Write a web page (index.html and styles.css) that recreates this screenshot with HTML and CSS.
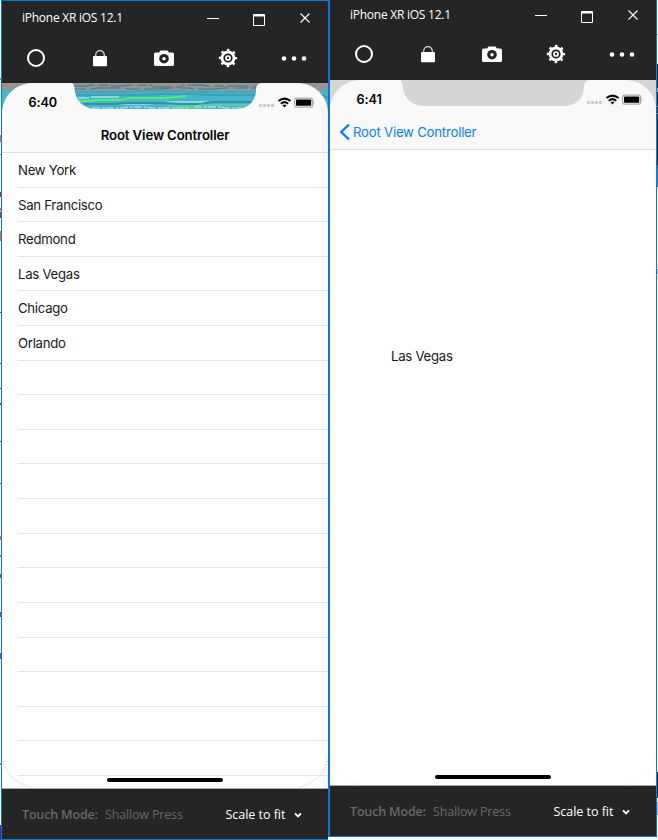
FILE: index.html
```
<!DOCTYPE html>
<html lang="en">
<head>
<meta charset="utf-8">
<title>iPhone XR iOS 12.1</title>
<link rel="stylesheet" href="styles.css">
</head>
<body>
<svg class="defs" aria-hidden="true">
  <symbol id="home" viewBox="0 0 22 22"><circle cx="11" cy="11" r="8" fill="none" stroke="#fff" stroke-width="2"/></symbol>
  <symbol id="lock" viewBox="0 0 22 22"><rect x="4" y="9" width="14" height="10.3" rx=".8" fill="#fff"/><path d="M6.7 9.500V8a4.300 4.300 0 0 1 8.600 0v1.500" fill="none" stroke="#ddd" stroke-width="1.200"/></symbol>
  <symbol id="camera" viewBox="0 0 22 22"><path d="M2.500 5.500H6l1.500-2h7l1.500 2h3.500q1.500 0 1.500 1.500v10.500q0 1.500-1.500 1.500h-17Q1 19 1 17.500V7q0-1.500 1.500-1.500z" fill="#fff"/><circle cx="11" cy="11.700" r="4.800" fill="#252525"/><circle cx="11" cy="11.700" r="2.200" fill="#252525" stroke="#fff" stroke-width="0"/><circle cx="11" cy="11.700" r="1.700" fill="#fff"/></symbol>
  <symbol id="gear" viewBox="0 0 22 22"><circle cx="11" cy="11" r="6" fill="none" stroke="#fff" stroke-width="2.800"/><circle cx="11" cy="11" r="8" fill="none" stroke="#fff" stroke-width="2.300" stroke-dasharray="2.500 3.783" stroke-dashoffset="1.250"/><circle cx="11" cy="11" r="2" fill="none" stroke="#fff" stroke-width="1.700"/></symbol>
  <symbol id="more" viewBox="0 0 26 22"><g fill="#fff"><circle cx="3" cy="11.500" r="2.300"/><circle cx="13" cy="11.500" r="2.300"/><circle cx="23" cy="11.500" r="2.300"/></g></symbol>
  <symbol id="controls" viewBox="0 0 106 16"><path d="M1 8.500h12" stroke="#fff"/><path d="M47.500 4.500h11v11h-11z" fill="none" stroke="#fff"/><path d="M47 5.500h12" stroke="#fff" stroke-width="2"/><path d="M94.500 3.500l9 9m0-9l-9 9" stroke="#fff" stroke-width="1.100"/></symbol>
  <symbol id="screen-top" viewBox="0 0 326 30"><path d="M0 30V28C2 12 13 1 30 0H69Q72 0 72.500 5C73 18 82 26 94 26H234C246 26 254 18 254 7Q254 0 260 0H296C315 1 326 15 326 30Z" fill="#f9f9f9"/></symbol>
  <symbol id="status" viewBox="0 0 58 14"><g fill="#c8c8c8"><rect x="0" y="9" width="3" height="3" rx="1"/><rect x="4" y="9" width="3" height="3" rx="1"/><rect x="8" y="9" width="3" height="3" rx="1"/><rect x="12" y="9" width="3" height="3" rx="1"/></g><g fill="none" stroke="#080808" stroke-width="2"><path d="M19.500 6.100q6-5 12 0"/><path d="M21.800 8.700q3.700-3.200 7.400 0"/></g><path d="M23.400 10.200q2.100-1.600 4.200 0l-2.100 2.300z" fill="#080808"/><rect x="35.600" y="3.100" width="18" height="9" rx="2.200" fill="none" stroke="#aaa" stroke-width="1.200"/><rect x="37" y="4.500" width="15.200" height="6.300" rx=".8"/><path d="M54.500 6q2 1.500 0 3z" fill="#aaa"/></symbol>
  <symbol id="down" viewBox="0 0 10 8"><path d="M2 2.400l3 3 3-3" fill="none" stroke="#fff" stroke-width="1.900"/></symbol>
</svg>
<main class="desktop">
  <svg class="gutter" viewBox="0 0 1 840" preserveAspectRatio="none"><path d="M0 0h1v840H0z" fill="#fff"/><path d="M.5 78v2m0 55v7m0 12v1m0 53v3m0 20v10M.5 536v4m0 15v2m0 206v2" stroke="#d8791e"/><path d="M.5 192v5m0 15v6M.5 312v1m0 50v1m0 24v1m0 14v2" stroke="#a33b32"/><path d="M.5 441v1m0 41v1m0 90v4m0 34v5m0 36v6" stroke="#4267c5"/><path d="M.5 825v15" stroke="#632472"/></svg>
  <section class="window first">
    <header class="titlebar"><span class="caption">iPhone XR iOS 12.1</span><svg class="controls"><use href="#controls"/></svg></header>
    <nav class="tools"><svg><use href="#home"/></svg><svg><use href="#lock"/></svg><svg><use href="#camera"/></svg><svg><use href="#gear"/></svg><svg class="more"><use href="#more"/></svg></nav>
    <div class="screen">
      <div class="navigation">
        <svg class="backdrop" viewBox="0 0 326 30">
          <path d="M0 0h326v30H0z" fill="#45b4cd"/><path d="M0 0h326v7H0z" fill="#999391"/>
          <g fill="none"><path d="M70 3h15l3-1h18l4 1h12l6-1h20l4 2h25l4-2h18l5 1h50" stroke="#2c7f91" stroke-dasharray="22 5 9 3"/><path d="M70 6h20l6-1h25l8 1h30l10-1h18l5 1h20l10-1h40" stroke="#397f8c" stroke-dasharray="14 4 30 6"/><path d="M70 9h55l15-1h40l12 1h70" stroke="#5a9eac" stroke-width="2"/><path d="M70 12h70l18-1h35l12 1h60" stroke="#3c9fb8" stroke-width="2"/><path d="M71 18h13l14-1h20l11-2h35l20-2" stroke="#54ee67" stroke-width="2"/><path d="M76 15h11m30 6h30l20-2h42m-120-5h28" stroke="#d5f4f5"/><path d="M82 21h30l13-1h38l16 1h20l10-2h45" stroke="#388fa7" stroke-width="2"/><path d="M90 25h32l3-1h20l4 1h37m6-1h28l3 1h17" stroke="#c9f2ff" stroke-dasharray="8 2 3 1"/><path d="M165 23h25l10-1h46m-76 3h34" stroke="#68e786" stroke-width="1.200"/><path d="M300 1l26 14" stroke="#55767b"/></g>
        </svg>
        <svg class="shape"><use href="#screen-top"/></svg>
        <div class="statusbar"><span class="time">6:40</span><svg class="status"><use href="#status"/></svg></div>
        <h1>Root View Controller</h1>
      </div>
      <ul class="cities"><li><span>New York</span></li><li><span>San Francisco</span></li><li><span>Redmond</span></li><li><span>Las Vegas</span></li><li><span>Chicago</span></li><li><span>Orlando</span></li><li></li><li></li><li></li><li></li><li></li><li></li><li></li><li></li><li></li><li></li><li></li><li></li></ul>
      <svg class="corners" viewBox="0 0 326 30"><path d="M0 0Q5 24 30 29.500M326 0Q321 24 296 29.500"/></svg>
      <i class="indicator"></i>
    </div>
    <footer><b>Touch Mode:</b><span class="press">Shallow Press</span><span class="scale">Scale to fit</span><svg class="down"><use href="#down"/></svg></footer>
  </section>
  <section class="window second">
    <header class="titlebar"><span class="caption">iPhone XR iOS 12.1</span><svg class="controls"><use href="#controls"/></svg></header>
    <nav class="tools"><svg><use href="#home"/></svg><svg><use href="#lock"/></svg><svg><use href="#camera"/></svg><svg><use href="#gear"/></svg><svg class="more"><use href="#more"/></svg></nav>
    <div class="screen">
      <div class="navigation">
        <svg class="shape"><use href="#screen-top"/></svg>
        <div class="statusbar"><span class="time">6:41</span><svg class="status"><use href="#status"/></svg></div>
        <div class="back"><svg viewBox="0 0 12 18"><path d="M10 1.500L2.300 9l7.700 7.500" fill="none" stroke="#087eff" stroke-width="2.400"/></svg><span>Root View Controller</span></div>
      </div>
      <div class="detail"><span>Las Vegas</span></div>
      <svg class="corners" viewBox="0 0 326 30"><path d="M0 0Q5 24 30 29.500M326 0Q321 24 296 29.500"/></svg>
      <i class="indicator"></i>
    </div>
    <footer><b>Touch Mode:</b><span class="press">Shallow Press</span><span class="scale">Scale to fit</span><svg class="down"><use href="#down"/></svg></footer>
  </section>
  <svg class="gutter" viewBox="0 0 1 840" preserveAspectRatio="none"><path d="M0 0h1v840H0z" fill="#fff"/><path d="M.5 64v101m0 607v26" stroke="#12304e"/><path d="M.5 34v1m0 53v4m0 14v1m0 6v1m0 155v5m0 528v13" stroke="#89b4d4"/><path d="M.5 165v22" stroke="#177bd1"/></svg>
</main>
</body>
</html>
```

FILE: styles.css
```
* { box-sizing: border-box; }
body { margin: 0; width: 658px; height: 840px; overflow: hidden; background: #fff; }
svg { display: block; flex: none; }
.defs { position: absolute; width: 0; height: 0; }
.desktop { display: flex; align-items: flex-start; height: 840px; }
.gutter { width: 1px; height: 840px; }
.window { display: flex; flex-direction: column; flex: none; background: #252525; font-family: "Open Sans", sans-serif; }
.first { width: 327px; height: 840px; border: solid #0878d1; border-width: 1px 0 1px 1px; }
.second { width: 329px; height: 837px; border: solid #0878dc; border-width: 0 1px 1px 2px; }
.titlebar { display: flex; height: 34px; padding-left: 20px; color: #fff; }
.first .titlebar { padding-top: 1px; }
.second .titlebar { height: 32px; margin-top: -1px; }
.caption { width: 184px; font-size: 12px; line-height: 32px; letter-spacing: -.25px; white-space: nowrap; }
.controls { width: 106px; height: 16px; margin-top: 8px; }
.tools { display: flex; gap: 42px; height: 48px; padding: 11.500px 0 0 23px; }
.second .tools { height: 49px; padding-top: 12px; }
.tools svg { width: 22px; height: 22px; }
.tools .more { width: 26px; }
.screen { position: relative; display: flex; flex-direction: column; height: 706px; flex: none; background: #fff; overflow: hidden; border-bottom: 1px solid #aaa; font-family: Inter, sans-serif; font-size: 13.200px; color: #171717; }
.navigation { position: relative; height: 70px; flex: none; background: linear-gradient(#d6d6d6 0 28px, #f9f9f9 28px); border-bottom: 1px solid #dedede; }
.shape, .backdrop { position: absolute; top: 0; left: 0; width: 326px; height: 30px; }
.statusbar { position: relative; display: flex; height: 38px; padding: 12px 0 0 26.500px; }
.time { width: 230px; font-size: 12.700px; line-height: 16px; font-weight: 600; color: #000; letter-spacing: -.1px; }
.status { width: 58px; height: 14px; }
h1 { position: relative; margin: 0; text-align: center; font-size: 13.200px; font-weight: 600; line-height: 29px; letter-spacing: -.11px; color: #000; }
.cities { margin: 0; padding: 0 0 0 16px; list-style: none; }
.cities li { height: 34.620px; line-height: 34px; border-bottom: 1px solid #e4e4e4; letter-spacing: -.28px; }
.indicator { position: absolute; left: 105px; bottom: 6px; width: 116px; height: 4px; border-radius: 2px; background: #000; }
.corners { position: absolute; bottom: 0; left: 0; width: 326px; height: 30px; fill: none; stroke: #999; stroke-width: .8; stroke-dasharray: 1 2; }
.second .corners { stroke: #ddd; }
.back { position: relative; display: flex; padding: 5px 0 0 9px; color: #087eff; line-height: 18px; letter-spacing: -.22px; }
.back svg { width: 12px; height: 18px; }
.back span { margin-left: 2px; }
.detail { padding: 197px 0 0 61px; line-height: 18px; letter-spacing: -.28px; }
footer { display: flex; align-items: center; flex: 1; padding: 1px 0 0 20px; font-size: 12.500px; line-height: 20px; white-space: nowrap; letter-spacing: -.16px; color: #686868; }
footer b { width: 83px; font-weight: 600; }
.press { width: 120.500px; }
.scale { width: 67.500px; color: #fff; letter-spacing: -.03px; }
.down { width: 10px; height: 8px; }
```
